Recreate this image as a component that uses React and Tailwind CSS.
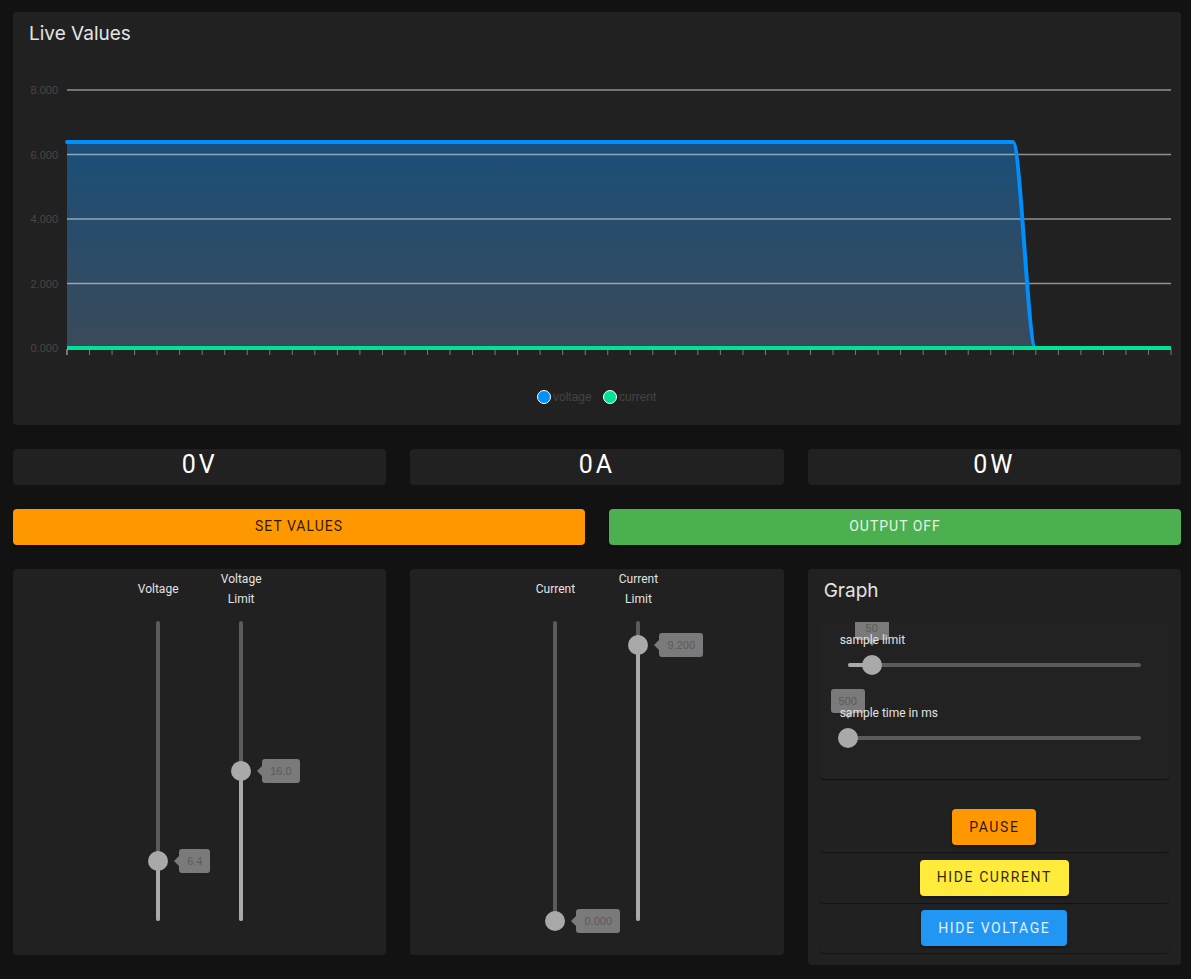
const yTicks = [
  { label: '8.000', y: 90 },
  { label: '6.000', y: 154.5 },
  { label: '4.000', y: 219 },
  { label: '2.000', y: 283.5 },
  { label: '0.000', y: 348 },
]

const xTicks = Array.from({ length: 50 }, (_, i) => 67 + (i * 1104) / 49)

const LiveChart = () => {
  const line = 'M67 142 L1013 142 C1020.5 142 1028 348 1035.5 348'
  const area = `${line} L67 348 Z`

  return (
    <svg width="1168" height="380" viewBox="13 45 1168 380" className="block">
      <defs>
        <linearGradient id="voltFill" x1="0" y1="0" x2="0" y2="1">
          <stop offset="0%" stopColor="#1a4e79" />
          <stop offset="100%" stopColor="#3b4a59" />
        </linearGradient>
      </defs>

      {/* area + grid */}
      <path d={area} fill="url(#voltFill)" />
      {yTicks.slice(0, 4).map((t) => (
        <line key={t.label} x1="67" x2="1171" y1={t.y} y2={t.y} stroke="#ffffff" strokeOpacity="0.5" strokeWidth="1.5" />
      ))}
      {yTicks.map((t) => (
        <text
          key={t.label}
          x="58"
          y={t.y + 4}
          textAnchor="end"
          fontSize="11"
          fill="#474747"
          fontFamily="'Liberation Sans', Arial, sans-serif"
        >
          {t.label}
        </text>
      ))}

      {/* x ticks */}
      {xTicks.map((x, i) => (
        <line key={i} x1={x} x2={x} y1="349" y2="355" stroke={i === 0 ? '#cccccc' : '#7a7a7a'} strokeWidth="1" />
      ))}

      {/* series */}
      <path d={line} fill="none" stroke="#008ffb" strokeWidth="4" strokeLinejoin="round" strokeLinecap="round" />
      <line x1="67" x2="1171" y1="348" y2="348" stroke="#00e396" strokeWidth="4" />

      {/* legend */}
      <circle cx="544" cy="397" r="6.5" fill="#008ffb" stroke="#ffffff" strokeWidth="1" />
      <text x="553" y="401" fontSize="12" fill="#444444" fontFamily="'Liberation Sans', Arial, sans-serif">
        voltage
      </text>
      <circle cx="610" cy="397" r="6.5" fill="#00e396" stroke="#ffffff" strokeWidth="1" />
      <text x="619" y="401" fontSize="12" fill="#444444" fontFamily="'Liberation Sans', Arial, sans-serif">
        current
      </text>
    </svg>
  )
}

const ValueBox = ({ text }) => (
  <div className="h-[36px] rounded bg-[#212121] flex items-center justify-center pb-[6px]">
    <span className="font-['Roboto',sans-serif] text-[25px] leading-none tracking-[3px] text-white">{text}</span>
  </div>
)

const VerticalSlider = ({ label, value, max, display }) => {
  const pct = (value / max) * 100
  return (
    <div className="w-[60px] flex flex-col items-center">
      <div className="h-[40px] flex items-center justify-center text-center text-[12px] leading-[20px] text-[#e2e2e2]">
        {label}
      </div>
      <div className="relative mt-[12px] h-[300px] w-[4px] rounded-full bg-[#5b5b5b]">
        <div className="absolute bottom-0 left-0 w-[4px] rounded-full bg-[#aaaaaa]" style={{ height: `${pct}%` }} />
        <div
          className="absolute left-1/2 w-5 h-5 -translate-x-1/2 translate-y-1/2 rounded-full bg-[#a9a9a9]"
          style={{ bottom: `${pct}%` }}
        />
        <div
          className="absolute left-[18px] translate-y-1/2 flex items-center"
          style={{ bottom: `${pct}%` }}
        >
          <div className="w-0 h-0 border-y-[5px] border-y-transparent border-r-[5px] border-r-[#7a7a7a]" />
          <div className="h-[24px] px-[8px] rounded-[3px] bg-[#7a7a7a] flex items-center text-[11px] text-[#5a5a5a] font-['Liberation_Sans',Arial,sans-serif]">
            {display}
          </div>
        </div>
      </div>
    </div>
  )
}

const HorizontalSlider = ({ label, pct, display }) => (
  <div>
    <div className="relative z-10 text-[12px] leading-[16px] text-[#e2e2e2]">{label}</div>
    <div className="relative ml-[8px] mt-[7px] h-[20px] w-[293px]">
      <div className="absolute left-0 right-0 top-[8px] h-[4px] rounded-full bg-[#5b5b5b]" />
      <div className="absolute left-0 top-[8px] h-[4px] rounded-full bg-[#aaaaaa]" style={{ width: `${pct}%` }} />
      <div
        className="absolute top-0 w-5 h-5 -translate-x-1/2 rounded-full bg-[#a9a9a9]"
        style={{ left: `${pct}%` }}
      />
      <div
        className="absolute bottom-[29px] -translate-x-1/2 flex flex-col items-center"
        style={{ left: `${pct}%` }}
      >
        <div className="h-[24px] min-w-[34px] px-[6px] rounded-[3px] bg-[#7a7a7a] flex items-center justify-center text-[11px] text-[#5a5a5a] font-['Liberation_Sans',Arial,sans-serif]">
          {display}
        </div>
        <div className="w-0 h-0 border-x-[5px] border-x-transparent border-t-[6px] border-t-[#7a7a7a]" />
      </div>
    </div>
  </div>
)

const ActionButton = ({ children, className }) => (
  <button className={`h-[36px] px-[17px] rounded text-[14px] tracking-[1.6px] uppercase shadow-[0_2px_3px_rgba(0,0,0,0.35)] ${className}`}>
    {children}
  </button>
)

const ButtonPanel = ({ children, className = '' }) => (
  <div className={`h-[50px] flex items-center justify-center rounded shadow-[0_1px_1px_rgba(0,0,0,0.45)] ${className}`}>
    {children}
  </div>
)

export default function App() {
  return (
    <div className="min-h-screen bg-[#121212] pl-[13px] pr-[10px] pt-[12px] pb-[14px] font-['Roboto',sans-serif]">
      {/* Live chart */}
      <div className="h-[413px] rounded bg-[#212121] overflow-hidden">
        <div className="pt-[10px] pl-[16px] font-['Inter',sans-serif] text-[19px] leading-[23px] text-[#e4e4e4]">
          Live Values
        </div>
        <LiveChart />
      </div>

      {/* Readouts */}
      <div className="mt-6 grid grid-cols-3 gap-6">
        <ValueBox text="0V" />
        <ValueBox text="0A" />
        <ValueBox text="0W" />
      </div>

      {/* Main buttons */}
      <div className="mt-6 grid grid-cols-2 gap-6">
        <button className="h-[36px] pb-[2px] rounded bg-[#ff9800] text-[14px] tracking-[1px] text-[rgba(0,0,0,0.85)] shadow-[0_2px_3px_rgba(0,0,0,0.35)]">
          SET VALUES
        </button>
        <button className="h-[36px] pb-[2px] rounded bg-[#4caf50] text-[14px] tracking-[1px] text-[#e6f4e6] shadow-[0_2px_3px_rgba(0,0,0,0.35)]">
          OUTPUT OFF
        </button>
      </div>

      {/* Controls */}
      <div className="mt-6 grid grid-cols-3 gap-6 items-start">
        <div className="h-[386px] rounded bg-[#212121] flex justify-center gap-[23px]">
          <VerticalSlider label="Voltage" value={6.4} max={32} display="6.4" />
          <VerticalSlider label={<>Voltage<br />Limit</>} value={16} max={32} display="16.0" />
        </div>

        <div className="h-[386px] rounded bg-[#212121] flex justify-center gap-[23px]">
          <VerticalSlider label="Current" value={0} max={10} display="0.000" />
          <VerticalSlider label={<>Current<br />Limit</>} value={9.2} max={10} display="9.200" />
        </div>

        <div className="h-[396px] rounded bg-[#212121] px-[12px] pb-[12px]">
          <div className="pt-[10px] pl-[4px] font-['Inter',sans-serif] text-[19px] leading-[23px] text-[#e4e4e4]">Graph</div>

          <div className="mt-[20px] h-[157px] overflow-hidden rounded bg-[#222222] shadow-[0_1px_1px_rgba(0,0,0,0.5)] pt-[10px] px-[20px]">
            <HorizontalSlider label="sample limit" pct={8.2} display="50" />
            <div className="mt-[30px]">
              <HorizontalSlider label="sample time in ms" pct={0} display="500" />
            </div>
          </div>

          <div className="mt-[23px]">
            <ButtonPanel>
              <ActionButton className="bg-[#ff9800] text-[rgba(0,0,0,0.85)]">Pause</ActionButton>
            </ButtonPanel>
            <ButtonPanel className="h-[51px]">
              <ActionButton className="bg-[#ffeb3b] text-[rgba(0,0,0,0.85)]">Hide Current</ActionButton>
            </ButtonPanel>
            <ButtonPanel>
              <ActionButton className="bg-[#2196f3] text-[#e3f1fd]">Hide Voltage</ActionButton>
            </ButtonPanel>
          </div>
        </div>
      </div>
    </div>
  )
}
